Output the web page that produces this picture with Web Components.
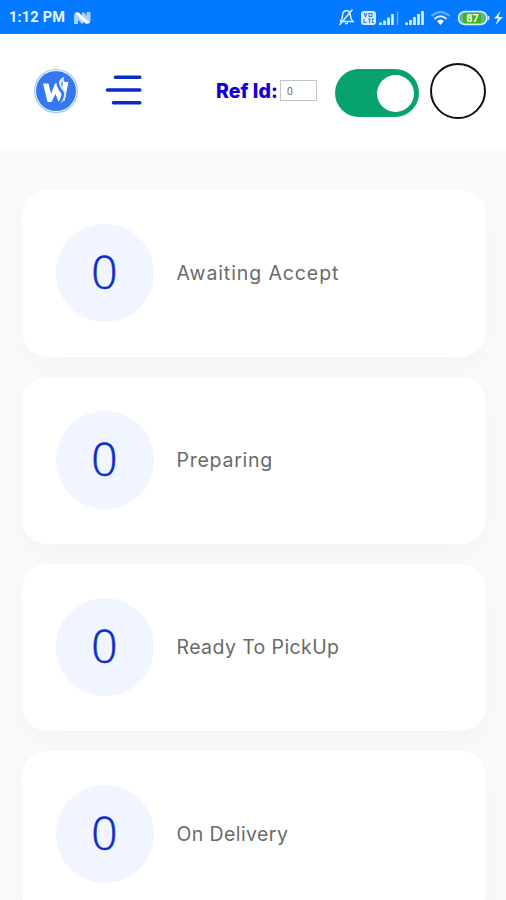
<!DOCTYPE html>
<html lang="en">
<head>
<meta charset="utf-8">
<title>Orders</title>
<style>
html,body{margin:0;height:100%;overflow:hidden}
body{font-family:Inter,"Liberation Sans",sans-serif;background:#fafafa}
</style>
</head>
<body>
<order-app></order-app>
<script>
const define = (name, html) => customElements.define(name, class extends HTMLElement {
  constructor() {
    super();
    const t = document.createElement('template');
    t.innerHTML = html;
    this.attachShadow({ mode: 'open' }).append(t.content.cloneNode(true));
  }
});

define('status-bar', `
<style>
:host{display:flex;flex:none;box-sizing:border-box;height:34px;background:#037aff;align-items:center;padding-left:9px;color:#e8f5ff}
.time{font:700 14.5px/20px Roboto,sans-serif;width:65px;letter-spacing:.2px;padding-top:1px}
svg{display:block}
.n{margin-top:1px}
.icons{margin-left:auto}
</style>
<span class="time">1:12 PM</span>
<svg class="n" width="17" height="12" viewBox="0 0 17 12"><path d="M0 12V3Q1 0 4 1L9 7V12Q7 12 6 10L4 8V12Z" fill="#a5d0ff"/><path d="M8 0Q10 0 11 1.500L12.500 4V0H16.500V9Q15 12 12 11L8 5Z" fill="#a5d0ff"/><path d="M1 1Q3-.8 6 1.500L11 6.500 16 10.500Q13 13 10 10.500L5 5Z" fill="#fff"/></svg>
<svg class="icons" width="170" height="34" viewBox="0 0 170 34" fill="none" stroke="#d9edff" stroke-width="1.500">
<path d="M4 21.500H17Q14.500 19 14.500 16Q14.500 11 10.500 10.500Q6.500 11 6.500 16Q6.500 19.500 4 21.500M9 23.500h3M3.500 25 16.500 9.500"/>
<rect x="25" y="11" width="15" height="14" rx="3" fill="#d9edff" stroke="none"/>
<path d="m28 13 1.500 3.500 1.500-3.500M33 13.500h3v3h-3zM28 19v3.500h2.500M32 19h3M33.500 19v4M38 19h-1.500v3.500H38" stroke="#2c83dd" stroke-width="1.100"/>
<path d="M44.500 22.500V25M48.500 20.500V25M52.500 17.500V25M56.500 14V25" stroke-width="2.700"/>
<path d="M61.500 11V25" stroke="#59a9ff" stroke-width="1.500"/>
<path d="M70.500 22.500V25M74.500 20V25M78.500 17V25M82.500 14V25M86.500 11V25" stroke-width="2.700"/>
<path d="M95.500 16Q104.500 8 113.500 16" stroke="#66b0ff" stroke-width="2"/><path d="M98.500 19Q104.500 13.500 110.500 19" stroke-width="2"/><path d="M101 21Q104.500 18 108 21L104.500 25Z" fill="#fff" stroke="none"/>
<rect x="122.500" y="11.500" width="28.500" height="13" rx="6.500" fill="#5db69d" stroke="#d9f2ff"/>
<rect x="127" y="13" width="18" height="10" rx="1.500" fill="#42b51b" stroke="none"/>
<path d="M152.500 16v4"/>
<text x="136.500" y="22" text-anchor="middle" font-family="Roboto,sans-serif" font-size="11" font-weight="700" fill="#f4fff0" stroke="none">87</text>
<path d="M164.500 11 158 18.500h4L159.500 25 167 17h-4.500Z" fill="#e8f6ff" stroke="none"/>
</svg>`);

define('brand-logo', `
<style>:host{display:block;width:46px;height:46px}svg{display:block}</style>
<svg width="46" height="46" viewBox="0 0 46 46">
<circle cx="23" cy="23" r="21.500" fill="#f4f9f5" stroke="#a9c7ee" stroke-width="1.200"/>
<circle cx="23" cy="23" r="20" fill="#3378ee"/>
<path d="M10 15.500H15.500L18 26 22 15.500H25.500L29 26 27 33.500H25.500L22.500 26 18.500 34H14.500Z" fill="#fff"/>
<path d="M30 14H35.500L31.500 33H28Z" fill="#fff"/>
<path d="M30 9Q24.500 12 25.500 17Q27 21 30 24.500Q31 29 27 35" fill="none" stroke="#3378ee" stroke-width="3.600"/>
<path d="M31.500 8.500Q25.500 11 26 16Q27 20 30.500 23.500Q32.500 28 27.500 35.500Q34.500 30 33 24Q31 20 28.500 17Q27.500 14 32 13.500Q29.500 12 31.500 8.500Z" fill="#dce9ff"/>
</svg>`);

define('menu-button', `
<style>:host{display:block}svg{display:block}</style>
<svg width="38" height="32" viewBox="0 0 38 32" stroke="#0a2bc4" stroke-width="3.600" stroke-linecap="round"><path d="M10.500 3.200H34.800M2.500 16H34.800M8.500 28.700H34.800"/></svg>`);

define('ref-field', `
<style>
:host{display:flex;align-items:center}
b{font-weight:800;font-size:19.5px;line-height:24px;letter-spacing:.05px;color:#1200d8;width:64px;white-space:nowrap}
span{box-sizing:border-box;width:37px;height:21px;border:1px solid #c5c5c5;font:10px/20px "Open Sans",sans-serif;color:#555;padding-left:6px;background:#fff}
</style>
<b><slot></slot></b><span>0</span>`);

define('toggle-switch', `
<style>
:host{display:flex;box-sizing:border-box;width:84px;height:48px;border-radius:24px;background:#08a26c;padding:5px;justify-content:flex-end;align-items:center}
i{width:37px;height:37px;border-radius:50%;background:#fff}
</style><i></i>`);

define('avatar-ring', `<style>:host{display:block;box-sizing:border-box;width:56px;height:56px;border:2px solid #111;border-radius:50%;background:#fff}</style>`);

define('app-header', `
<style>
:host{display:flex;flex:none;box-sizing:border-box;height:115px;background:#fff;padding:0 20px 2px 33px;align-items:center}
menu-button{margin-left:26px;margin-top:-1px}
ref-field{margin-left:73px}
toggle-switch{margin-left:18px;margin-top:5px}
avatar-ring{margin-left:11px}
</style>
<brand-logo></brand-logo><menu-button></menu-button><ref-field>Ref Id:</ref-field><toggle-switch></toggle-switch><avatar-ring></avatar-ring>`);

define('status-card', `
<style>
:host{display:flex;box-sizing:border-box;height:166.500px;flex:none;align-items:center;background:#fff;border-radius:25px;padding-left:33.500px;box-shadow:0 10px 24px rgba(50,90,80,.035)}
.count{box-sizing:border-box;padding-bottom:4px;width:98px;height:98px;border-radius:50%;background:#f1f5ff;display:flex;align-items:center;justify-content:center;font:300 46px/50px "Open Sans",sans-serif;color:#0a2fc8;-webkit-text-stroke:.6px #0a2fc8}
.label{margin-left:23px;font-size:19.500px;line-height:28px;color:#6a6a6a;white-space:nowrap;letter-spacing:var(--track,0)}
</style>
<div class="count"><slot name="count"></slot></div><div class="label"><slot></slot></div>`);

define('order-app', `
<style>
:host{display:flex;flex-direction:column;height:900px;overflow:hidden}
main{display:flex;flex-direction:column;gap:20.500px;padding:41px 20px 0 22px}
</style>
<status-bar></status-bar><app-header></app-header>
<main>
<status-card style="--track:.9px"><span slot="count">0</span>Awaiting Accept</status-card>
<status-card style="--track:.75px"><span slot="count">0</span>Preparing</status-card>
<status-card style="--track:.4px"><span slot="count">0</span>Ready To PickUp</status-card>
<status-card style="--track:.4px"><span slot="count">0</span>On Delivery</status-card>
</main>`);
</script>
</body>
</html>
